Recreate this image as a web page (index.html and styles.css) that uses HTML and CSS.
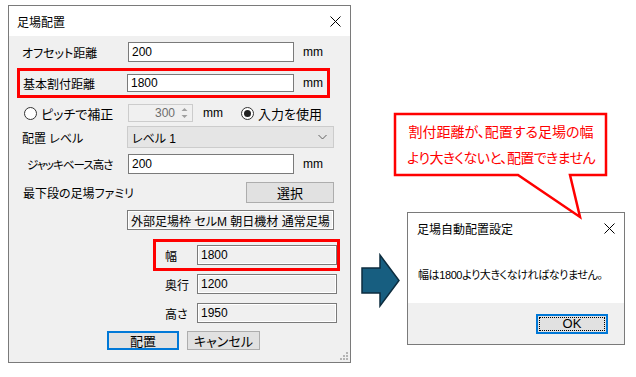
FILE: index.html
```html
<!DOCTYPE html>
<html lang="ja">
<head>
    <meta charset="UTF-8">
    <meta name="viewport" content="width=device-width, initial-scale=1.0">
    <title>足場配置</title>
    <link rel="stylesheet" href="styles.css">
</head>
<body>
<div class="desk">

    <!-- メインダイアログ -->
    <div class="win main">
        <div class="titlebar">
            <span class="title">足場配置</span>
            <svg class="close" width="11" height="11" viewBox="0 0 11 11"><path d="M0.5,0.5 L10.5,10.5 M10.5,0.5 L0.5,10.5" stroke="#000" stroke-width="1"/></svg>
        </div>
        <div class="body">
            <div class="row r1">
                <span class="lbl w106">オフセット距離</span>
                <span class="edit w166">200</span>
                <span class="unit">mm</span>
            </div>
            <div class="row hl1">
                <span class="lbl w104">基本割付距離</span>
                <span class="edit w167 h18">1800</span>
                <span class="unit">mm</span>
            </div>
            <div class="row r3">
                <span class="lbl w104"><span class="radio"></span><span class="rtext">ピッチで補正</span></span>
                <span class="spin"><span class="spinval">300</span><span class="spinbtn"><svg width="9" height="14" viewBox="0 0 9 14"><path d="M1.5,5 L4.5,2 L7.5,5 Z M1.5,9 L4.5,12 L7.5,9 Z" fill="#a0a0a0"/></svg></span></span>
                <span class="unit u38">mm</span>
                <span class="radio on"></span><span class="rtext">入力を使用</span>
            </div>
            <div class="row r4">
                <span class="lbl w105">配置 レベル</span>
                <span class="combo">レベル 1<svg class="chev" width="9" height="6" viewBox="0 0 9 6"><path d="M0.5,1 L4.5,5 L8.5,1" fill="none" stroke="#606060" stroke-width="1"/></svg></span>
            </div>
            <div class="row r5">
                <span class="lbl w101 tight">ジャッキベース高さ</span>
                <span class="edit w166">200</span>
                <span class="unit">mm</span>
            </div>
            <div class="row r6">
                <span class="lbl w223">最下段の足場ファミリ</span>
                <span class="btn w88">選択</span>
            </div>
            <div class="row r7">
                <span class="edit ro w207">外部足場枠 セルM 朝日機材 通常足場</span>
            </div>
            <div class="row hl2">
                <span class="lbl w32">幅</span>
                <span class="edit ro w140">1800</span>
            </div>
            <div class="row r9">
                <span class="lbl w32">奥行</span>
                <span class="edit ro w140">1200</span>
            </div>
            <div class="row r10">
                <span class="lbl w32">高さ</span>
                <span class="edit ro w140">1950</span>
            </div>
            <div class="row r11">
                <span class="btn def w72">配置</span>
                <span class="btn w73">キャンセル</span>
            </div>
            <svg class="grip" width="9" height="9" viewBox="0 0 9 9"><path d="M7,1h2v2h-2z M4,4h2v2h-2z M7,4h2v2h-2z M1,7h2v2h-2z M4,7h2v2h-2z M7,7h2v2h-2z" fill="#b4b4b4"/></svg>
        </div>
    </div>

    <!-- 矢印 -->
    <svg class="arrow" width="42" height="56" viewBox="0 0 42 56"><polygon points="2,15 20,15 20,2 39,27.5 20,53 20,40 2,40" fill="#175e80" stroke="#0d2d3f" stroke-width="1.5"/></svg>

    <!-- メッセージダイアログ -->
    <div class="win msg">
        <div class="titlebar mtitle">
            <span class="title">足場自動配置設定</span>
            <svg class="close" width="11" height="11" viewBox="0 0 11 11"><path d="M0.5,0.5 L10.5,10.5 M10.5,0.5 L0.5,10.5" stroke="#000" stroke-width="1"/></svg>
        </div>
        <div class="mbody">幅は1800より大きくなければなりません。</div>
        <div class="mfoot"><span class="btn def okbtn"><span class="focus">OK</span></span></div>
    </div>

    <!-- 吹き出し -->
    <svg class="balloon" width="216" height="108" viewBox="0 0 216 108"><path d="M2,2 H213 V63 H177 L187,105 L125,63 H2 Z" fill="#fff" stroke="#f00" stroke-width="2.5" stroke-linejoin="miter"/></svg>
    <div class="btext">
        <span>割付距離が、配置する足場の幅</span>
        <span class="line2">より大きくないと、配置できません</span>
    </div>
</div>
</body>
</html>
```

FILE: styles.css
```css
body {
    margin: 0;
    background-color: #fff;
    font-family: "Liberation Sans", "Noto Sans CJK JP", sans-serif;
    font-size: 12px;
    font-feature-settings: "palt";
    color: #000;
}
.desk {
    position: relative;
    width: 636px;
    height: 377px;
    overflow: hidden;
}
.win {
    position: absolute;
    border: 1px solid #7a7a7a;
    background-color: #f0f0f0;
    display: flex;
    flex-direction: column;
}
.main {
    left: 8px;
    top: 5px;
    width: 341px;
    height: 356px;
}
.titlebar {
    height: 30px;
    background-color: #fff;
    display: flex;
    align-items: center;
    padding: 0 9px 0 8px;
    flex-shrink: 0;
}
.close {
    margin-left: auto;
}
.body {
    position: relative;
    flex: 1;
}
.row {
    display: flex;
    align-items: center;
    box-sizing: border-box;
}
.lbl {
    display: flex;
    align-items: center;
    flex-shrink: 0;
    white-space: nowrap;
}
.tight {
    font-size: 11.5px;
    letter-spacing: -1px;
}
.w32 { width: 32px; }
.w101 { width: 101px; }
.w104 { width: 104px; }
.w105 { width: 105px; }
.w106 { width: 106px; }
.w223 { width: 223px; }

.edit {
    box-sizing: border-box;
    height: 20px;
    border: 1px solid #7a7a7a;
    background-color: #fff;
    padding-left: 3px;
    display: flex;
    align-items: center;
    white-space: nowrap;
    overflow: hidden;
}
.edit.ro {
    background-color: #f0f0f0;
    box-shadow: inset 0 0 0 1px #fff;
}
.w140 { width: 140px; }
.w166 { width: 166px; }
.w167 { width: 167px; }
.w207 { width: 207px; }
.h18 { height: 18px; }
.unit {
    margin-left: 9px;
    font-size: 12px;
}
.u38 {
    width: 38px;
    margin-left: 10px;
}

/* 行ごとの位置 */
.r1 { margin-top: 6px; height: 20px; padding-left: 13px; }
.hl1 {
    margin: 6px 0 0 8px;
    width: 313px;
    height: 30px;
    border: 3px solid #f00;
    padding-left: 3px;
}
.r3 { margin-top: 6px; height: 18px; padding-left: 15px; }
.r4 { margin-top: 4px; height: 22px; padding-left: 13px; }
.r5 { margin-top: 6px; height: 20px; padding-left: 18px; }
.r6 { margin-top: 8px; height: 21px; padding-left: 14px; }
.r7 { margin-top: 7px; height: 20px; padding-left: 118px; }
.hl2 {
    margin: 9px 0 0 144px;
    width: 187px;
    height: 32px;
    border: 3px solid #f00;
    padding-left: 9px;
}
.r9 { margin-top: 3px; height: 20px; padding-left: 156px; }
.r10 { margin-top: 9px; height: 20px; padding-left: 156px; }
.r11 { margin-top: 8px; height: 19px; padding-left: 98px; gap: 8px; }

.radio {
    width: 13px;
    height: 13px;
    box-sizing: border-box;
    border: 1px solid #333;
    border-radius: 50%;
    background-color: #fff;
    display: inline-flex;
    align-items: center;
    justify-content: center;
    flex-shrink: 0;
}
.radio.on::after {
    content: "";
    width: 7px;
    height: 7px;
    border-radius: 50%;
    background-color: #222;
}
.rtext {
    margin-left: 4px;
    font-size: 13px;
}
.spin {
    box-sizing: border-box;
    width: 65px;
    height: 18px;
    border: 1px solid #cccccc;
    background-color: #f0f0f0;
    display: flex;
    align-items: center;
}
.spinval {
    flex: 1;
    text-align: right;
    color: #6d6d6d;
    padding-right: 2px;
}
.spinbtn {
    width: 15px;
    height: 16px;
    display: flex;
    align-items: center;
    justify-content: center;
}
.combo {
    box-sizing: border-box;
    width: 207px;
    height: 22px;
    border: 1px solid #cccccc;
    background-color: #e5e5e5;
    display: flex;
    align-items: center;
    padding: 0 6px 0 4px;
}
.chev {
    margin-left: auto;
}
.btn {
    box-sizing: border-box;
    height: 100%;
    border: 1px solid #adadad;
    background-color: #e1e1e1;
    display: flex;
    align-items: center;
    justify-content: center;
    font-size: 13px;
}
.btn.def {
    border: 2px solid #0078d7;
}
.w72 { width: 72px; }
.w73 { width: 73px; }
.w88 { width: 88px; }
.grip {
    position: absolute;
    right: 2px;
    bottom: 2px;
}

.arrow {
    position: absolute;
    left: 360px;
    top: 253px;
}

/* メッセージダイアログ */
.msg {
    left: 407px;
    top: 212px;
    width: 216px;
    height: 131px;
    background-color: #fff;
}
.mtitle {
    height: 31px;
    padding: 0 9px 0 9px;
}
.mbody {
    height: 59px;
    display: flex;
    align-items: center;
    padding-left: 10px;
    font-size: 11px;
    letter-spacing: -0.4px;
    white-space: nowrap;
}
.mfoot {
    flex: 1;
    background-color: #f0f0f0;
    display: flex;
    align-items: center;
    justify-content: flex-end;
    padding-right: 16px;
}
.okbtn {
    width: 72px;
    height: 20px;
    padding: 1px;
}
.focus {
    width: 100%;
    height: 100%;
    box-sizing: border-box;
    border: 1px dotted #000;
    display: flex;
    align-items: center;
    justify-content: center;
}

/* 吹き出し */
.balloon {
    position: absolute;
    left: 393px;
    top: 112px;
}
.btext {
    position: absolute;
    left: 395px;
    top: 114px;
    width: 212px;
    height: 62px;
    display: flex;
    flex-direction: column;
    align-items: center;
    justify-content: center;
    color: #f00;
    font-size: 14px;
    line-height: 26px;
    white-space: nowrap;
}
.line2 {
    letter-spacing: -0.6px;
}
```
